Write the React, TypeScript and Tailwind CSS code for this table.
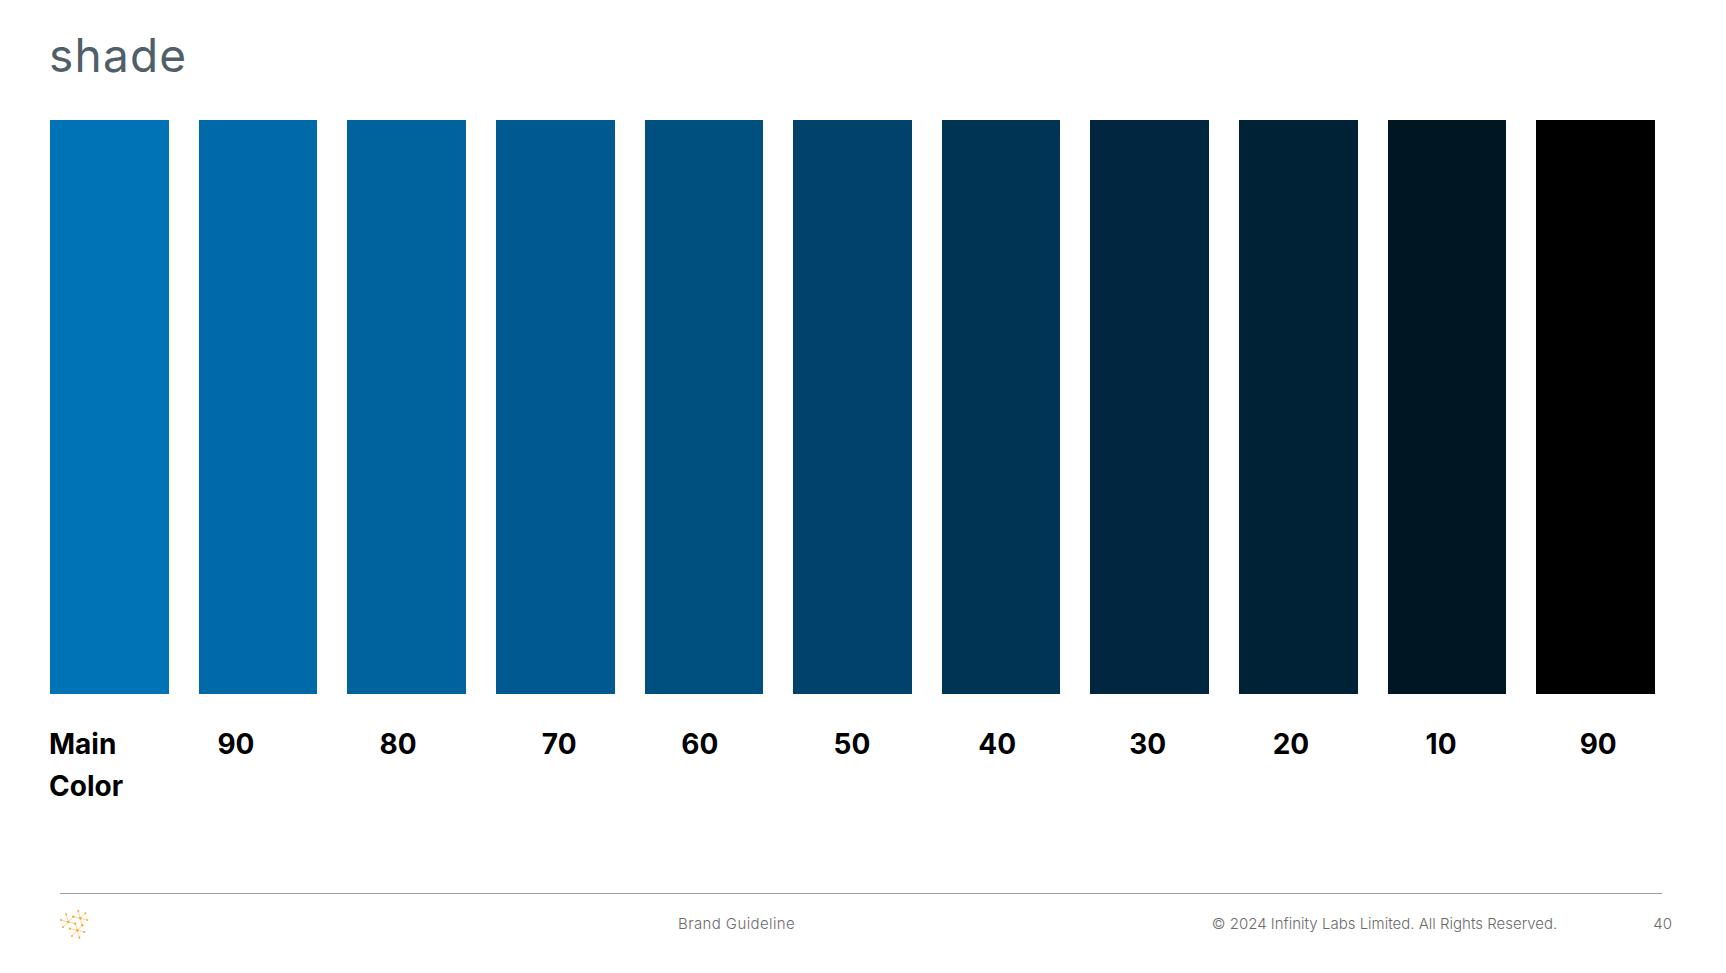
import React from 'react'

const shades = [
  { color: 'bg-[#0073b6]', label: 'Main Color', pad: '' },
  { color: 'bg-[#0069a8]', label: '90', pad: 'pr-[44px]' },
  { color: 'bg-[#00639e]', label: '80', pad: 'pr-[17px]' },
  { color: 'bg-[#005990]', label: '70', pad: 'pl-[8px]' },
  { color: 'bg-[#00507f]', label: '60', pad: 'pr-[8px]' },
  { color: 'bg-[#00426a]', label: '50', pad: 'pr-[1px]' },
  { color: 'bg-[#003455]', label: '40', pad: 'pr-[8px]' },
  { color: 'bg-[#00273f]', label: '30', pad: 'pr-[4px]' },
  { color: 'bg-[#002236]', label: '20', pad: 'pr-[15px]' },
  { color: 'bg-[#001622]', label: '10', pad: 'pr-[12px]' },
  { color: 'bg-[#000000]', label: '90', pad: 'pl-[5px]' },
]

function NetworkLogo() {
  const hubs = [
    { c: [205, 183], n: [[183, 177], [198, 160], [189, 198], [220, 167], [226, 188]] },
    { c: [241, 172], n: [[235, 150], [256, 157], [262, 177], [220, 167], [247, 193]] },
    { c: [232, 208], n: [[210, 203], [226, 188], [253, 213], [216, 225], [238, 230], [247, 193]] },
  ]
  return (
    <svg width="34" height="34" viewBox="174 138 102 102" className="shrink-0">
      {hubs.map((h, i) => (
        <g key={i} stroke="#f4ae3a" strokeWidth="1.6" fill="#f4ae3a">
          {h.n.map(([x, y], j) => (
            <line key={j} x1={h.c[0]} y1={h.c[1]} x2={x} y2={y} />
          ))}
          {h.n.map(([x, y], j) => (
            <circle key={'d' + j} cx={x} cy={y} r="3.2" stroke="none" />
          ))}
          <circle cx={h.c[0]} cy={h.c[1]} r="4" stroke="none" />
        </g>
      ))}
    </svg>
  )
}

export default function App() {
  return (
    <div
      className="w-[1726px] h-[973px] bg-white overflow-hidden flex flex-col"
      style={{ fontFamily: 'Inter, "Noto Sans", sans-serif' }}
    >
      {/* Title */}
      <div className="pl-[49px] pt-[32px]">
        <h1 className="text-[46px] leading-[46px] font-normal text-[#505f68] tracking-[1.2px]">shade</h1>
      </div>

      {/* Swatches */}
      <div className="ml-[50px] w-[1605px] mt-[42px] grid grid-cols-11 gap-[30px] h-[574px]">
        {shades.map((s, i) => (
          <div key={i} className={s.color} />
        ))}
      </div>

      {/* Labels */}
      <div className="ml-[50px] w-[1605px] mt-[29px] grid grid-cols-11 gap-[30px]">
        {shades.map((s, i) => (
          <div
            key={i}
            className={`text-[28px] leading-[42px] font-bold text-black ${
              i === 0 ? 'text-left -ml-[1px]' : 'text-center'
            } ${s.pad}`}
          >
            {s.label}
          </div>
        ))}
      </div>

      {/* Footer */}
      <div className="ml-[60px] w-[1602px] mt-[86px] h-px bg-[#9e9e9e]" />
      <div className="flex items-center h-[34px] mt-[13px] pl-[58px] pr-[54px] text-[15px] font-light text-[#6b6b6b]">
        <NetworkLogo />
        <span className="ml-[586px] tracking-[0.4px]">Brand Guideline</span>
        <span className="flex-1" />
        <span>© 2024 Infinity Labs Limited. All Rights Reserved.</span>
        <span className="ml-[96px]">40</span>
      </div>
    </div>
  )
}
